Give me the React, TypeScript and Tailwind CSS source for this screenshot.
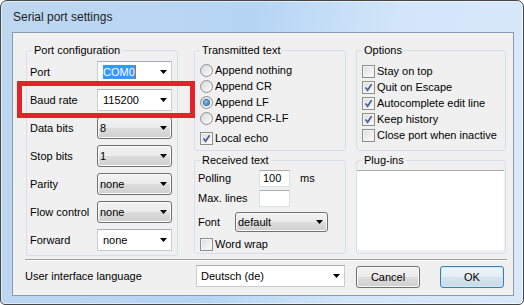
import type { ReactNode } from 'react'

function Arrow() {
  return (
    <svg width="7" height="4" viewBox="0 0 7 4" className="shrink-0">
      <path d="M0 0h7L3.5 4z" fill="#000" />
    </svg>
  )
}

function EditCombo({ children, className = '' }: { children: ReactNode; className?: string }) {
  return (
    <div
      className={`flex h-[22px] items-center justify-between border border-[#c9cdd3] border-t-[#abadb3] bg-white pr-[4px] ${className}`}
    >
      <div className="flex items-center">{children}</div>
      <Arrow />
    </div>
  )
}

function ListCombo({ children, className = '' }: { children: ReactNode; className?: string }) {
  return (
    <div
      className={`flex items-center justify-between rounded-[3px] border border-[#707070] bg-[linear-gradient(#f2f2f2,#ebebeb_50%,#dddddd_50%,#cfcfcf)] pl-[2px] pr-[4px] shadow-[inset_0_0_0_1px_#fbfbfb] ${className}`}
    >
      <span>{children}</span>
      <Arrow />
    </div>
  )
}

function Group({ title, className = '', children }: { title: string; className?: string; children?: ReactNode }) {
  return (
    <fieldset className={`rounded-[3px] border border-[#d5dfe5] ${className}`}>
      <legend className="ml-[5px] px-[2px] leading-[14px]">{title}</legend>
      {children}
    </fieldset>
  )
}

function Check({ checked = false }: { checked?: boolean }) {
  return (
    <div className="flex h-[13px] w-[13px] shrink-0 items-center justify-center border border-[#8e8f8f] bg-[linear-gradient(135deg,#dcdcdc,#fdfdfd)] shadow-[inset_0_0_0_1px_#f4f4f4]">
      {checked && (
        <svg width="9" height="9" viewBox="0 0 9 9">
          <path d="M1.5 4.5L3.6 7.2L7.6 1.2" fill="none" stroke="#4a5f97" strokeWidth="1.7" />
        </svg>
      )}
    </div>
  )
}

function Radio({ checked = false }: { checked?: boolean }) {
  return (
    <div className="flex h-[13px] w-[13px] shrink-0 items-center justify-center rounded-full border border-[#8e8f8f] bg-[linear-gradient(135deg,#d6d6d6,#fdfdfd)]">
      {checked && (
        <div className="h-[5px] w-[5px] rounded-full bg-[radial-gradient(circle_at_35%_35%,#8cc4ef,#1f65a8)] shadow-[0_0_0_1px_#2e6fa8]" />
      )}
    </div>
  )
}

const portRows = [
  { label: 'Port', value: 'COM0', kind: 'sel' },
  { label: 'Baud rate', value: '115200', kind: 'edit' },
  { label: 'Data bits', value: '8', kind: 'list' },
  { label: 'Stop bits', value: '1', kind: 'list' },
  { label: 'Parity', value: 'none', kind: 'list' },
  { label: 'Flow control', value: 'none', kind: 'list' },
  { label: 'Forward', value: 'none', kind: 'edit' },
]

const sendModes = [
  { label: 'Append nothing', on: false },
  { label: 'Append CR', on: false },
  { label: 'Append LF', on: true },
  { label: 'Append CR-LF', on: false },
]

const options = [
  { label: 'Stay on top', on: false },
  { label: 'Quit on Escape', on: true },
  { label: 'Autocomplete edit line', on: true },
  { label: 'Keep history', on: true },
  { label: 'Close port when inactive', on: false },
]

export default function App() {
  return (
    <div className="relative flex h-[305px] w-[524px] flex-col rounded-t-[7px] rounded-b-[5px] border border-[#464646] bg-[linear-gradient(100deg,#bed7f0,#b6d5f5_45%,#d3e6f9_70%,#d8e9fa)] pb-[8px] pl-[11px] pr-[9px] font-['Liberation_Sans',Arial,sans-serif] text-[11px] text-black shadow-[inset_0_0_0_1px_rgba(255,255,255,0.55)]">
      {/* Title bar */}
      <div className="flex h-[31px] items-center pl-[1px] text-[12px] text-[#1e1e1e]">Serial port settings</div>

      {/* Client area */}
      <div className="flex flex-1 flex-col border border-[#8a9bb0] bg-[#f0f0f0]">
        <div className="flex pl-[13px] pt-[10px]">
          <Group title="Port configuration" className="h-[213px] w-[152px]">
            <div className="mt-[4px] flex flex-col gap-[6px] pl-[3px]">
              {portRows.map((r) => (
                <div key={r.label} className="flex h-[22px] items-center">
                  <span className="w-[67px]">{r.label}</span>
                  {r.kind === 'list' ? (
                    <ListCombo className="h-[22px] w-[75px]">{r.value}</ListCombo>
                  ) : (
                    <EditCombo className="w-[75px]">
                      {r.kind === 'sel' ? (
                        <>
                          <span className="ml-[5px] bg-[#3399ff] leading-[14px] text-white">{r.value}</span>
                          <span className="h-[14px] w-[1px] bg-[#c46a12]" />
                        </>
                      ) : (
                        <span className="ml-[5px]">{r.value}</span>
                      )}
                    </EditCombo>
                  )}
                </div>
              ))}
            </div>
          </Group>

          <div className="ml-[16px] flex w-[152px] flex-col gap-[2px]">
            <Group title="Transmitted text" className="h-[108px]">
              <div className="mt-[5px] flex flex-col pl-[5px]">
                {sendModes.map((m) => (
                  <div key={m.label} className="flex h-[16px] items-center gap-[2px]">
                    <Radio checked={m.on} />
                    <span>{m.label}</span>
                  </div>
                ))}
                <div className="mt-[4px] flex h-[16px] items-center gap-[2px]">
                  <Check checked />
                  <span>Local echo</span>
                </div>
              </div>
            </Group>
            <Group title="Received text" className="h-[101px]">
              <div className="flex flex-col pl-[3px]">
                <div className="mt-[3px] flex h-[17px] items-center">
                  <span className="w-[61px]">Polling</span>
                  <div className="flex h-[17px] w-[31px] items-center border border-[#dbdfe6] border-t-[#abadb3] bg-white pl-[3px]">
                    100
                  </div>
                  <span className="ml-[10px]">ms</span>
                </div>
                <div className="mt-[3px] flex h-[17px] items-center">
                  <span className="w-[61px]">Max. lines</span>
                  <div className="h-[17px] w-[31px] border border-[#dbdfe6] border-t-[#abadb3] bg-white" />
                </div>
                <div className="mt-[5px] flex h-[20px] items-center">
                  <span className="w-[37px]">Font</span>
                  <ListCombo className="h-[20px] w-[93px]">default</ListCombo>
                </div>
                <div className="ml-[2px] mt-[4px] flex h-[16px] items-center gap-[2px]">
                  <Check />
                  <span>Word wrap</span>
                </div>
              </div>
            </Group>
          </div>

          <div className="ml-[10px] flex w-[150px] flex-col gap-[2px]">
            <Group title="Options" className="h-[108px]">
              <div className="mt-[6px] flex flex-col pl-[5px]">
                {options.map((o) => (
                  <div key={o.label} className="flex h-[16px] items-center gap-[2px]">
                    <Check checked={o.on} />
                    <span>{o.label}</span>
                  </div>
                ))}
              </div>
            </Group>
            <Group title="Plug-ins" className="h-[101px]">
              <div className="mr-[1px] mt-[3px] h-[80px] border-t border-[#a9a9a9] bg-white" />
            </Group>
          </div>
        </div>

        {/* Separator */}
        <div className="ml-[12px] mt-[3px] w-[482px] border-t border-b border-t-[#a0a0a0] border-b-white" />

        {/* Bottom row */}
        <div className="mt-[3px] flex items-center pl-[12px]">
          <span className="w-[171px]">User interface language</span>
          <EditCombo className="w-[149px]">
            <span className="ml-[4px]">Deutsch (de)</span>
          </EditCombo>
          <button className="ml-[11px] mt-[2px] flex h-[22px] w-[64px] items-center justify-center rounded-[3px] border border-[#707070] bg-[linear-gradient(#f2f2f2,#ebebeb_50%,#dddddd_50%,#cfcfcf)] shadow-[inset_0_0_0_1px_#fbfbfb]">
            Cancel
          </button>
          <button className="ml-[20px] mt-[2px] flex h-[22px] w-[64px] items-center justify-center rounded-[3px] border border-[#3c7fb1] bg-[linear-gradient(#eef5fa,#e4eef5_50%,#d5e3ec_50%,#cadbe7)] shadow-[inset_0_0_0_1px_#cdeafb]">
            OK
          </button>
        </div>
      </div>

      {/* Annotation box */}
      <div className="absolute left-[16px] top-[80px] h-[37px] w-[178px] border-[5px] border-[#e4222a]" />
    </div>
  )
}
